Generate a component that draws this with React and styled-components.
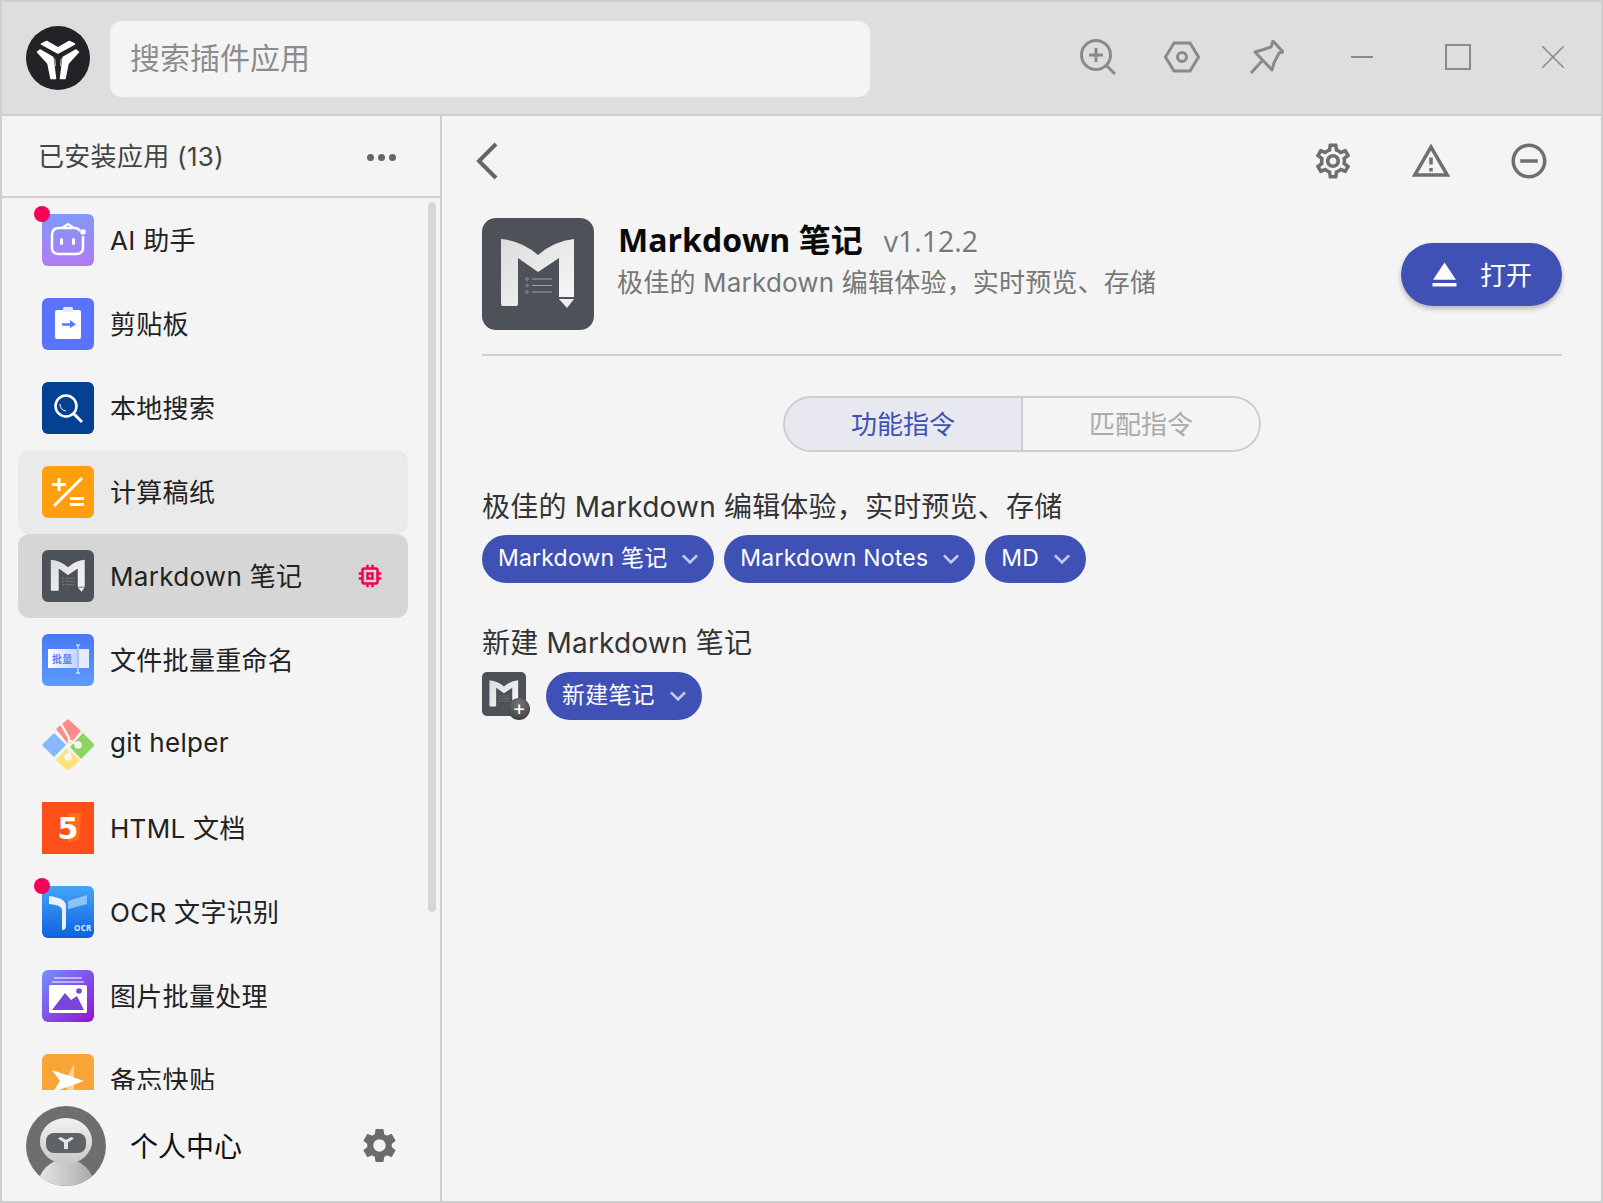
import React from 'react';
import styled, { createGlobalStyle } from 'styled-components';
import { MdMemory, MdOutlineSettings, MdOutlineReportProblem, MdRemoveCircleOutline, MdSettings, MdEject, MdExpandMore } from 'react-icons/md';

const Global = createGlobalStyle`
  html, body { margin: 0; padding: 0; background: #f4f4f4; }
  * { box-sizing: border-box; }
  body { font-family: Inter, "Noto Sans CJK SC", sans-serif; }
`;

const Win = styled.div`
  width: 1603px;
  height: 1203px;
  border: 2px solid #cfcfcf;
  background: #f4f4f4;
  display: flex;
  flex-direction: column;
  overflow: hidden;
`;

const TopBar = styled.header`
  height: 114px;
  flex: none;
  background: #dedede;
  border-bottom: 2px solid #cfcfcf;
  display: flex;
  align-items: center;
  padding: 0 0 0 24px;
`;

const Logo = styled.svg`
  width: 64px;
  height: 64px;
  flex: none;
`;

const Search = styled.div`
  width: 760px;
  height: 76px;
  margin-left: 20px;
  margin-top: 2px;
  padding: 0 0 6px 20px;
  border-radius: 12px;
  background: #f4f4f4;
  color: #8c8c8c;
  font-size: 30px;
  display: flex;
  align-items: center;
`;

const TopIcons = styled.div`
  display: flex;
  align-items: center;
  margin-left: auto;
  margin-top: -2px;
`;

const TopIcon = styled.svg`
  display: block;
  width: ${p => p.$w}px;
  height: ${p => p.$h}px;
  margin-left: ${p => p.$ml}px;
  fill: none;
  stroke: ${p => p.$c || '#8a8a8a'};
  stroke-width: ${p => p.$sw || 3};
`;

const EndGap = styled.span`
  width: 37px;
`;

const Body = styled.div`
  flex: 1;
  display: flex;
  min-height: 0;
`;

const Side = styled.aside`
  width: 440px;
  flex: none;
  border-right: 2px solid #cfcfcf;
  display: flex;
  flex-direction: column;
`;

const SideHead = styled.div`
  height: 82px;
  flex: none;
  border-bottom: 2px solid #cfcfcf;
  display: flex;
  align-items: center;
  justify-content: space-between;
  padding: 0 44px 0 36px;
  font-size: 26px;
  letter-spacing: 0.3px;
  color: #444;
  span { padding-bottom: 3px; }
`;

const Dots = styled.div`
  display: flex;
  gap: 4px;
  margin-top: 2px;
  i {
    width: 7px;
    height: 7px;
    border-radius: 50%;
    background: #666;
  }
`;

const List = styled.div`
  position: relative;
  height: 892px;
  flex: none;
  overflow: hidden;
`;

const Thumb = styled.div`
  position: absolute;
  left: 426px;
  top: 4px;
  width: 8px;
  height: 710px;
  border-radius: 4px;
  background: #d6d6d6;
`;

const Row = styled.div`
  height: 84px;
  margin: 0 32px 0 16px;
  padding-left: 24px;
  border-radius: 12px;
  background: ${p => (p.$selected ? '#d6d6d6' : p.$hover ? '#eaeaea' : 'transparent')};
  display: flex;
  align-items: center;
  font-size: 26px;
  letter-spacing: 0.3px;
  color: #222;
`;

const RowName = styled.span`
  padding-bottom: 3px;
`;

const IconBox = styled.div`
  position: relative;
  width: 52px;
  height: 52px;
  flex: none;
  margin-right: 16px;
  svg {
    display: block;
    width: 52px;
    height: 52px;
    border-radius: ${p => (p.$square ? 0 : 6)}px;
  }
`;

const Dot = styled.i`
  position: absolute;
  left: -8px;
  top: -8px;
  width: 16px;
  height: 16px;
  border-radius: 50%;
  background: #f50057;
`;

const Plugin = styled.div`
  margin-left: auto;
  margin-right: 23px;
  color: #f50057;
  font-size: 30px;
  line-height: 0;
`;

const SideFoot = styled.div`
  flex: 1;
  display: flex;
  align-items: center;
  padding: 0 40px 0 24px;
  font-size: 28px;
  color: #111;
  span { padding-bottom: 2px; }
`;

const Avatar = styled.svg`
  width: 80px;
  height: 80px;
  flex: none;
  margin-right: 24px;
`;

const FootGear = styled.div`
  margin-left: auto;
  color: #6b6b6b;
  font-size: 41px;
  line-height: 0;
`;

const Main = styled.main`
  flex: 1;
  min-width: 0;
  padding: 0 39px 0 40px;
`;

const Tools = styled.div`
  height: 90px;
  margin: 0 -16px 12px -10px;
  display: flex;
  align-items: center;
`;

const Back = styled.svg`
  width: 30px;
  height: 38px;
  fill: none;
  stroke: #666;
  stroke-width: 4;
`;

const ToolBtn = styled.div`
  width: 98px;
  display: flex;
  justify-content: center;
  color: #6f6f6f;
  font-size: 42px;
  line-height: 0;
  &:first-of-type { margin-left: auto; }
`;

const AppHead = styled.div`
  display: flex;
  align-items: center;
  padding-bottom: 24px;
  border-bottom: 2px solid #d0d0d0;
`;

const BigIcon = styled.svg`
  width: 112px;
  height: 112px;
  flex: none;
  border-radius: 14px;
`;

const AppText = styled.div`
  align-self: flex-start;
  margin-left: 24px;
`;

const AppTitle = styled.div`
  display: flex;
  align-items: baseline;
  height: 44px;
  line-height: 44px;
  font-family: "Open Sans", "Noto Sans CJK SC", sans-serif;
  font-size: 32px;
  font-weight: 700;
  color: #0a0a0a;
  small {
    margin-left: 21px;
    font-size: 28.5px;
    font-weight: 400;
    color: #777;
  }
`;

const AppDesc = styled.div`
  margin-left: -1px;
  font-size: 26px;
  line-height: 42px;
  letter-spacing: 0.2px;
  color: #777;
`;

const OpenBtn = styled.div`
  margin-left: auto;
  width: 161px;
  height: 63px;
  padding: 0 0 2px 23px;
  border-radius: 32px;
  background: #3f51b5;
  box-shadow: 0 3px 5px rgba(0, 0, 0, 0.25);
  color: #fff;
  font-size: 26px;
  display: flex;
  align-items: center;
  gap: 15px;
  svg { font-size: 41px; margin-top: 2px; }
`;

const Tabs = styled.div`
  display: flex;
  justify-content: center;
  margin-top: 40px;
`;

const Tab = styled.div`
  width: ${p => (p.$on ? 240 : 238)}px;
  height: 56px;
  padding-bottom: 3px;
  border: 2px solid #cdcdd2;
  border-left-width: ${p => (p.$on ? 2 : 0)}px;
  border-radius: ${p => (p.$on ? '28px 0 0 28px' : '0 28px 28px 0')};
  background: ${p => (p.$on ? '#e8e8f0' : 'transparent')};
  color: ${p => (p.$on ? '#3f51b5' : '#aaa')};
  font-size: 26px;
  display: flex;
  align-items: center;
  justify-content: center;
`;

const Feature = styled.section`
  margin-top: ${p => p.$mt}px;
`;

const FeatureTitle = styled.div`
  font-size: 28px;
  line-height: 40px;
  height: 40px;
  padding-bottom: 3px;
  letter-spacing: 0.2px;
  color: #333;
  margin-top: -3px;
  margin-bottom: ${p => p.$mb}px;
`;

const Chips = styled.div`
  display: flex;
  align-items: center;
  gap: 10px;
`;

const Chip = styled.div`
  height: 48px;
  padding: 0 8px 3px 16px;
  border-radius: 24px;
  background: #3f51b5;
  color: #fff;
  font-size: 23px;
  line-height: 30px;
  letter-spacing: 0.2px;
  display: flex;
  align-items: center;
  gap: 7px;
  svg { color: #c5cae9; font-size: 32px; margin-top: 3px; }
`;

const CmdIcon = styled.div`
  position: relative;
  width: 44px;
  height: 44px;
  margin-right: 10px;
  align-self: flex-start;
  svg { display: block; width: 44px; height: 44px; border-radius: 5px; }
`;

const PlusBadge = styled.span`
  position: absolute;
  right: -4px;
  bottom: -4px;
  width: 22px;
  height: 22px;
  border-radius: 50%;
  background: radial-gradient(circle at 50% 30%, #777, #333);
  color: #fff;
  font-size: 20px;
  line-height: 20px;
  text-align: center;
`;

const MPaths = () => (
  <>
    <defs>
      <linearGradient id="mg" x1="0" y1="0" x2="1" y2="1">
        <stop offset="0" stopColor="#dcdcdc" />
        <stop offset="1" stopColor="#f8f8f8" />
      </linearGradient>
    </defs>
    <rect width="112" height="112" fill="#4d5258" />
    <path d="M19 21Q40 23 56 37Q72 23 92 21V79H77V40L56 54L36 40V86Q36 88 34 88H21Q19 88 19 86Z" fill="url(#mg)" />
    <path d="M77 81H92L85 90Z" fill="#eee" />
    <path d="M50 61H70M50 67.500H70M50 74H70" stroke="#9ba0a5" strokeWidth="1" />
    <circle cx="45" cy="61" r="1.300" fill="none" stroke="#aaa" strokeWidth=".7" />
    <circle cx="45" cy="67.500" r="1.300" fill="none" stroke="#aaa" strokeWidth=".7" />
    <circle cx="45" cy="74" r="1.300" fill="none" stroke="#aaa" strokeWidth=".7" />
  </>
);

const MarkIcon = () => <svg viewBox="0 0 112 112"><MPaths /></svg>;

const AiIcon = () => (
  <svg viewBox="0 0 52 52">
    <defs>
      <linearGradient id="ai" x1="0" y1="0" x2="0" y2="1">
        <stop offset="0" stopColor="#7f98fb" />
        <stop offset="1" stopColor="#b07cf2" />
      </linearGradient>
    </defs>
    <rect width="52" height="52" fill="url(#ai)" />
    <path d="M38 17Q36 14 33 14H17Q10 14 10 21V34Q10 40 17 40H34Q41 40 41 34V22" fill="none" stroke="#fff" strokeWidth="2.500" />
    <path d="M20 14L26 10L32 14" fill="none" stroke="#fff" strokeWidth="2.200" />
    <circle cx="41" cy="18" r="2.800" fill="#fff" />
    <rect x="18" y="24" width="3" height="7" rx="1.500" fill="#fff" />
    <rect x="30" y="24" width="3" height="7" rx="1.500" fill="#fff" />
  </svg>
);

const ClipIcon = () => (
  <svg viewBox="0 0 52 52">
    <rect width="52" height="52" fill="#5a73ff" />
    <rect x="13" y="12" width="26" height="29" rx="2" fill="#fff" />
    <rect x="21" y="9" width="10" height="5" rx="1.500" fill="#e8eaff" />
    <path d="M20 26.500H30" stroke="#5a73ff" strokeWidth="2.500" />
    <path d="M28 22L34 26.500L28 30Z" fill="#5a73ff" />
  </svg>
);

const FindIcon = () => (
  <svg viewBox="0 0 52 52">
    <rect width="52" height="52" fill="#054193" />
    <circle cx="24" cy="24" r="10.500" fill="none" stroke="#fff" strokeWidth="2.500" />
    <path d="M32 32L40 40" stroke="#fff" strokeWidth="3" />
    <path d="M18 22Q18 28 24 29" fill="none" stroke="#fff" strokeWidth="1" />
  </svg>
);

const CalcIcon = () => (
  <svg viewBox="0 0 52 52">
    <rect width="52" height="52" fill="#ff9f0d" />
    <path d="M10 18.500H24M17 12V25M12 40L40 12M28 32.500H42M28 38.500H42" stroke="#fff" strokeWidth="3" />
  </svg>
);

const RenameIcon = () => (
  <svg viewBox="0 0 52 52">
    <defs>
      <linearGradient id="rn" x1="0" y1="0" x2="0" y2="1">
        <stop offset="0" stopColor="#4a78f5" />
        <stop offset="1" stopColor="#5a9bff" />
      </linearGradient>
      <linearGradient id="rw" x1="0" y1="0" x2="1" y2="0">
        <stop offset="0" stopColor="#fff" />
        <stop offset="1" stopColor="#c6d4fb" />
      </linearGradient>
    </defs>
    <rect width="52" height="52" fill="url(#rn)" />
    <rect x="6" y="15" width="29" height="19" fill="url(#rw)" />
    <rect x="37" y="15" width="10" height="19" fill="#e6ecff" />
    <path d="M36 11V39M34 11H38M34 39H38" stroke="#fff" strokeWidth="1" />
    <text x="10" y="29" fontSize="10" fontWeight="700" fill="#5a84f0" fontFamily="Noto Sans CJK SC">批量</text>
  </svg>
);

const GitIcon = () => (
  <svg viewBox="0 0 52 52">
    <g strokeLinejoin="round" strokeWidth="1.500">
      <path d="M1 27L12 16L23 27L12 38Z" fill="#86b7ff" stroke="#86b7ff" />
      <path d="M15 11L26 2L38 13L27 26Z" fill="#ff8a8a" stroke="#ff8a8a" />
      <path d="M41 16L52 27L39 40L29 29Z" fill="#8ed460" stroke="#8ed460" />
      <path d="M25 31L37 42L26 52L15 42Z" fill="#ffe27a" stroke="#ffe27a" />
    </g>
    <path d="M19 6L27 20V38M27 22L36 27" fill="none" stroke="#f4f4f4" strokeWidth="2.500" />
    <circle cx="26" cy="39" r="3.800" fill="#f4f4f4" />
    <circle cx="36" cy="27" r="3.800" fill="#f4f4f4" />
  </svg>
);

const HtmlIcon = () => (
  <svg viewBox="0 0 52 52">
    <rect width="52" height="52" fill="#ff5019" />
    <path d="M26 11H39L37 37L26 41Z" fill="#ff6d1a" />
    <text x="26" y="37" fontSize="30" fontWeight="700" fill="#fff" textAnchor="middle" fontFamily="DejaVu Sans">5</text>
  </svg>
);

const OcrIcon = () => (
  <svg viewBox="0 0 52 52">
    <defs>
      <linearGradient id="oc" x1="0" y1="0" x2="0" y2="1">
        <stop offset="0" stopColor="#45a5f7" />
        <stop offset="1" stopColor="#0d62e0" />
      </linearGradient>
    </defs>
    <rect width="52" height="52" fill="url(#oc)" />
    <path d="M7 10Q24 12 24 20V40Q24 44 20 44V24Q20 19 7 18Z" fill="#e8f2fd" />
    <path d="M26 15L45 9V18L26 23Z" fill="#8cc4f8" />
    <text x="32" y="45" fontSize="8" fontWeight="700" fill="#d9ecff" fontFamily="Open Sans">OCR</text>
  </svg>
);

const ImageIcon = () => (
  <svg viewBox="0 0 52 52">
    <defs>
      <linearGradient id="im" x1="0" y1="0" x2="1" y2="1">
        <stop offset="0" stopColor="#6f92ff" />
        <stop offset="1" stopColor="#9312cf" />
      </linearGradient>
    </defs>
    <rect width="52" height="52" fill="url(#im)" />
    <path d="M12 8H40M10 12H42" stroke="#fff" strokeWidth="1.200" />
    <rect x="7" y="15" width="38" height="28" rx="1.500" fill="#fff" />
    <path d="M10 40L23 23L29 30L35 26L42 40Z" fill="#7a45d8" />
    <circle cx="37" cy="21" r="2.800" fill="#7a45d8" />
  </svg>
);

const MemoIcon = () => (
  <svg viewBox="0 0 52 52">
    <rect width="52" height="52" fill="#f9a535" />
    <path d="M32 10V46L22 30Z" fill="#fbd6a3" />
    <path d="M10 16L42 27L11 38L18 27Z" fill="#fff" />
  </svg>
);

const apps = [
  { name: 'AI 助手', Icon: AiIcon, dot: true },
  { name: '剪贴板', Icon: ClipIcon },
  { name: '本地搜索', Icon: FindIcon },
  { name: '计算稿纸', Icon: CalcIcon, hover: true },
  { name: 'Markdown 笔记', Icon: MarkIcon, selected: true, plugin: true },
  { name: '文件批量重命名', Icon: RenameIcon },
  { name: 'git helper', Icon: GitIcon, square: true },
  { name: 'HTML 文档', Icon: HtmlIcon, square: true },
  { name: 'OCR 文字识别', Icon: OcrIcon, dot: true },
  { name: '图片批量处理', Icon: ImageIcon },
  { name: '备忘快贴', Icon: MemoIcon },
];

const App = () => (
  <Win>
    <Global />
    <TopBar>
      <Logo viewBox="0 0 64 64">
        <circle cx="32" cy="32" r="32" fill="#222327" />
        <g fill="#fff" stroke="#fff" strokeWidth="1.500" strokeLinejoin="round">
          <path d="M15.500 18L20.700 15.500L32 22L43.300 15.500L48.500 18L32 27Z" />
          <path d="M11.500 26L14 24L27 31.500L29.500 52.500L25 52.500L22 37.500Z" />
          <path d="M52.500 26L50 24L37 31.500L34.500 52.500L39 52.500L42 37.500Z" />
        </g>
        <path d="M27 31.500L29 34L29.500 40" fill="none" stroke="#a9a9a9" strokeWidth="1.200" />
        <path d="M37 31.500L35 34L34.500 40" fill="none" stroke="#a9a9a9" strokeWidth="1.200" />
      </Logo>
      <Search>搜索插件应用</Search>
      <TopIcons>
        <TopIcon viewBox="0 0 36 36" $w={36} $h={36} $ml={0}>
          <circle cx="16" cy="16" r="14.500" />
          <path d="M16 9V23M9 16H23M26 26L35 35" />
        </TopIcon>
        <TopIcon viewBox="0 0 36 32" $w={36} $h={32} $ml={48}>
          <path d="M1.500 16L10 2H26L34.500 16L26 30H10Z" />
          <circle cx="18" cy="16" r="4.500" />
        </TopIcon>
        <TopIcon viewBox="0 0 34 34" $w={34} $h={34} $ml={50}>
          <path d="M23 1L33 12L29 13L24 23L22 30L5 12L12 10L21 7Z" strokeLinejoin="round" />
          <path d="M12 21L1 33" />
        </TopIcon>
        <TopIcon viewBox="0 0 22 4" $w={22} $h={4} $ml={67} $sw={2}>
          <path d="M0 2H22" />
        </TopIcon>
        <TopIcon viewBox="0 0 26 26" $w={26} $h={26} $ml={72} $sw={2}>
          <rect x="1" y="1" width="24" height="24" />
        </TopIcon>
        <TopIcon viewBox="0 0 22 22" $w={22} $h={22} $ml={71} $sw={1.500}>
          <path d="M0 0L22 22M22 0L0 22" />
        </TopIcon>
        <EndGap />
      </TopIcons>
    </TopBar>
    <Body>
      <Side>
        <SideHead>
          <span>已安装应用 (13)</span>
          <Dots><i /><i /><i /></Dots>
        </SideHead>
        <List>
          <Thumb />
          {apps.map(a => (
            <Row key={a.name} $selected={a.selected} $hover={a.hover}>
              <IconBox $square={a.square}>
                <a.Icon />
                {a.dot && <Dot />}
              </IconBox>
              <RowName>{a.name}</RowName>
              {a.plugin && <Plugin><MdMemory /></Plugin>}
            </Row>
          ))}
        </List>
        <SideFoot>
          <Avatar viewBox="0 0 80 80">
            <defs>
              <clipPath id="av"><circle cx="40" cy="40" r="40" /></clipPath>
              <linearGradient id="bd" x1="0" y1="0" x2="1" y2="0">
                <stop offset="0" stopColor="#e8e8e8" />
                <stop offset="1" stopColor="#a8a8a8" />
              </linearGradient>
              <linearGradient id="hd" x1="0" y1="0" x2="0" y2="1">
                <stop offset="0" stopColor="#f2f2f2" />
                <stop offset="1" stopColor="#c8c8c8" />
              </linearGradient>
            </defs>
            <g clipPath="url(#av)">
              <rect width="80" height="80" fill="#6e6e6e" />
              <ellipse cx="40" cy="80" rx="28" ry="27" fill="url(#bd)" />
              <rect x="14" y="30" width="52" height="16" rx="8" fill="#b5b5b5" />
              <ellipse cx="40" cy="35" rx="26" ry="23" fill="url(#hd)" />
              <rect x="20" y="27" width="40" height="20" rx="8" fill="#5f6366" />
              <path d="M32 32.500L34.500 31L40 33.800L45.500 31L48 32.500L42 36.500V43H38V36.500Z" fill="#e4e4e4" />
            </g>
          </Avatar>
          <span>个人中心</span>
          <FootGear><MdSettings /></FootGear>
        </SideFoot>
      </Side>
      <Main>
        <Tools>
          <Back viewBox="0 0 30 38"><path d="M24 2L7 19L24 36" /></Back>
          <ToolBtn><MdOutlineSettings /></ToolBtn>
          <ToolBtn><MdOutlineReportProblem /></ToolBtn>
          <ToolBtn><MdRemoveCircleOutline /></ToolBtn>
        </Tools>
        <AppHead>
          <BigIcon viewBox="0 0 112 112"><MPaths /></BigIcon>
          <AppText>
            <AppTitle>Markdown 笔记<small>v1.12.2</small></AppTitle>
            <AppDesc>极佳的 Markdown 编辑体验，实时预览、存储</AppDesc>
          </AppText>
          <OpenBtn><MdEject />打开</OpenBtn>
        </AppHead>
        <Tabs>
          <Tab $on>功能指令</Tab>
          <Tab>匹配指令</Tab>
        </Tabs>
        <Feature $mt={38}>
          <FeatureTitle $mb={8}>极佳的 Markdown 编辑体验，实时预览、存储</FeatureTitle>
          <Chips>
            <Chip>Markdown 笔记<MdExpandMore /></Chip>
            <Chip>Markdown Notes<MdExpandMore /></Chip>
            <Chip>MD<MdExpandMore /></Chip>
          </Chips>
        </Feature>
        <Feature $mt={43}>
          <FeatureTitle $mb={9}>新建 Markdown 笔记</FeatureTitle>
          <Chips>
            <CmdIcon>
              <MarkIcon />
              <PlusBadge>+</PlusBadge>
            </CmdIcon>
            <Chip>新建笔记<MdExpandMore /></Chip>
          </Chips>
        </Feature>
      </Main>
    </Body>
  </Win>
);

export default App;
